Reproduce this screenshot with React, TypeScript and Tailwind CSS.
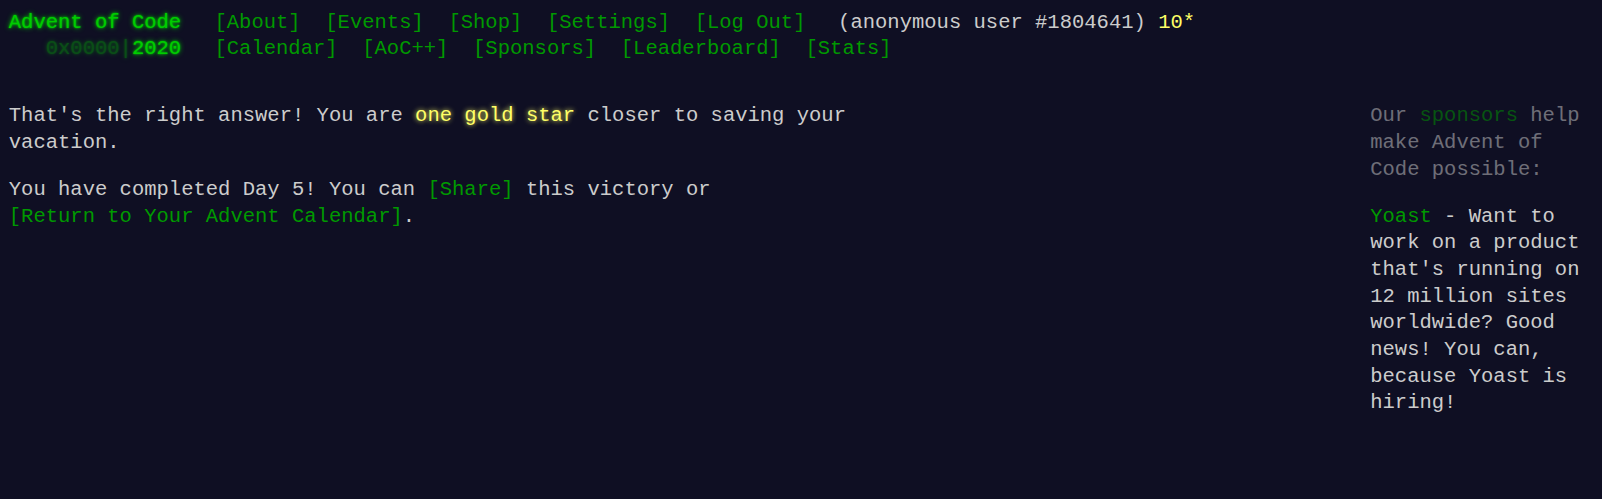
import React from "react";

const glowGreen = "[text-shadow:0_0_2px_#00cc00,0_0_5px_#00cc00]";

export default function App() {
  return (
    <div className="min-h-screen w-full bg-[#0f0f23] text-[#cccccc] [font-family:'Liberation_Mono','DejaVu_Sans_Mono',monospace] text-[20.53px] leading-[26.7px] px-[8.8px] pt-[9.5px]">
      <header className="whitespace-pre">
        <div className="flex">
          <div className={`w-[205.7px] shrink-0 text-[#00cc00] ${glowGreen}`}>Advent of Code</div>
          <div className="flex">
            <span className="text-[#009900]">[About]</span>
            <span>{"  "}</span>
            <span className="text-[#009900]">[Events]</span>
            <span>{"  "}</span>
            <span className="text-[#009900]">[Shop]</span>
            <span>{"  "}</span>
            <span className="text-[#009900]">[Settings]</span>
            <span>{"  "}</span>
            <span className="text-[#009900]">[Log Out]</span>
          </div>
          <div className="ml-[32.6px]">
            <span>(anonymous user #1804641) </span>
            <span className="text-[#ffff66]">10*</span>
          </div>
        </div>
        <div className="flex">
          <div className={`w-[205.7px] shrink-0 text-[#00cc00] ${glowGreen}`}>
            <span>{"   "}</span>
            <span className="opacity-[0.33]">0x0000|</span>
            <span>2020</span>
          </div>
          <div className="flex">
            <span className="text-[#009900]">[Calendar]</span>
            <span>{"  "}</span>
            <span className="text-[#009900]">[AoC++]</span>
            <span>{"  "}</span>
            <span className="text-[#009900]">[Sponsors]</span>
            <span>{"  "}</span>
            <span className="text-[#009900]">[Leaderboard]</span>
            <span>{"  "}</span>
            <span className="text-[#009900]">[Stats]</span>
          </div>
        </div>
      </header>

      <div className="mt-[40.5px] flex items-start">
        <main className="w-[924px] shrink-0">
          <p>
            That's the right answer! You are{" "}
            <span className="text-[#ffff66] [text-shadow:0_0_5px_#ffff66]">one gold star</span> closer to saving
            your vacation.
          </p>
          <p className="mt-[20px]">
            You have completed Day 5! You can <span className="text-[#009900]">[Share]</span> this victory or{" "}
            <span className="whitespace-nowrap">
              <span className="text-[#009900]">[Return to Your Advent Calendar]</span>.
            </span>
          </p>
        </main>
        <aside className="ml-auto w-[223px] shrink-0">
          <div className="opacity-50">
            Our <span className="text-[#009900]">sponsors</span> help make Advent of Code possible:
          </div>
          <div className="mt-[20px]">
            <span className="text-[#009900]">Yoast</span> - Want to work on a product that's running on 12 million
            sites worldwide? Good news! You can, because Yoast is hiring!
          </div>
        </aside>
      </div>
    </div>
  );
}
